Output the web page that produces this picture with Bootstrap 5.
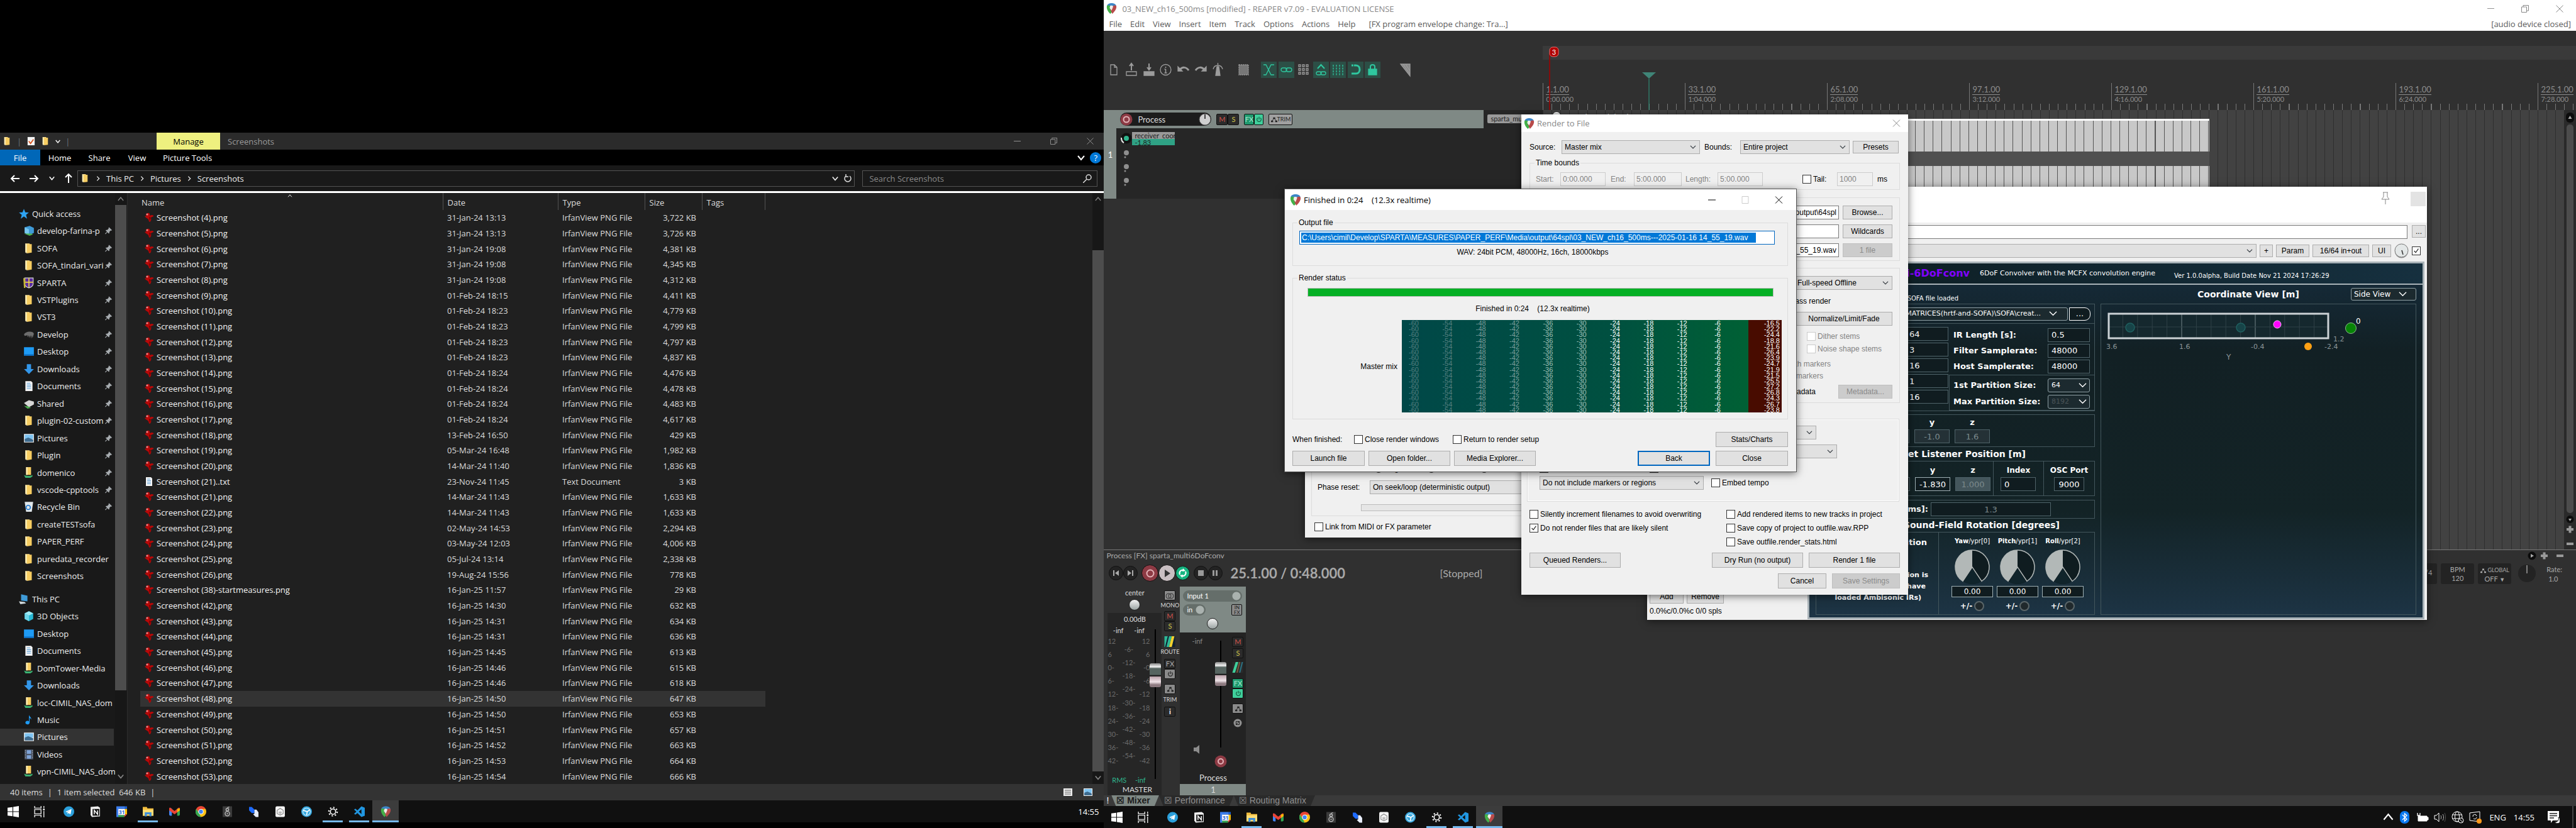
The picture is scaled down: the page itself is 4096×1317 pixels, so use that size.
<!DOCTYPE html>
<html lang="en">
<head>
<meta charset="utf-8">
<meta name="viewport" content="width=device-width, initial-scale=1">
<title>Desktop</title>
<link href="https://cdn.jsdelivr.net/npm/bootstrap@5.3.0/dist/css/bootstrap.min.css" rel="stylesheet">
<style>
body{margin:0;background:#000;font-family:"Open Sans","Noto Sans",sans-serif;font-size:13px;line-height:18px;color:#fff;overflow:hidden}
.desk{height:100vh;min-height:1317px}
.mon-l{flex:3 1 0;min-width:0;padding:211px 0 9px}
.mon-r{flex:4 1 0;min-width:0;background:#303030}
svg{display:block;flex:none}
a{color:inherit;text-decoration:none}
button,input,select{font-family:inherit;font-size:inherit;line-height:inherit}
/* explorer */
.ex-title{height:27px;background:#2b2b2b;color:#9a9a9a}
.quick{width:249px}
.manage{background:#eef07f;width:101px}
.ex-rib{height:25px;background:#000}
.ex-rib a{height:25px}
.file-tab{background:#0067b8;width:64px}
.help{background:#0078d7;width:18px;height:18px}
.ex-addr{height:41px;background:#191919}
.ex-box{height:26px;border:1px solid #535353;background:#191919;color:#eee;border-radius:0}
.ex-box input{background:none;border:0;outline:0;color:#fff;width:100%}
.ex-box input::placeholder{color:#8a8a8a;opacity:1}
.ex-body{background:#202020;border-top:3px solid #fff}
.side{width:203px;background:#191919;border-right:1px solid #2c2c2c}
.tree{padding:19px 0 6px;width:183px;overflow:hidden}
.tree a{flex:3 1 0;padding-left:37px;white-space:nowrap;color:#eee}
.tree a.root{padding-left:29px}
.tree .gapx{flex:1 1 0}
.tree a.on{background:#333;margin-right:2px}
.tree .nm{width:108px;overflow:hidden}
.tree .wide .nm{width:124px}
.sbar{width:18px;background:#171717;color:#888}
.sbar i{width:18px;background:#4d4d4d}
.files{width:994px;margin-left:20px;height:940px;table-layout:fixed;border-collapse:collapse}
.files th{height:27px;font-weight:400;padding:2px 7px 0;border-right:1px solid #525252;color:#ddd}
.files th:first-child{padding-left:2px}
.files td{padding:0 7px;color:#ddd;white-space:nowrap;overflow:hidden}
.files td:first-child{padding-left:6px;color:#f4f4f4}
.files td:nth-child(4){text-align:right;padding-right:9px}
.files tr.on td{background:#333}
.ex-stat{height:26px;background:#333;color:#ddd}
.tbar{height:35px;background:#101010}
.tbar button{width:42px;border:0;background:none;padding:0}
.tbar .run{box-shadow:inset 0 -3px 0 #76b9ed;width:32px;margin:0 5px}
.tbar .act{background:#3c3c3c;box-shadow:inset 0 -3px 0 #76b9ed}
/* daw */
.lato{font-family:Lato,"Open Sans",sans-serif}
.dw-head{height:49px;background:#fff;color:#5a5a5a}
.dw-head .ttl{height:27px;color:#888}
.dw-head .menu{height:22px;gap:13px}
.left-col{flex:0 0 698px}
.tools{padding:49px 0 0 3px;height:126px}
.tools button{width:25px;height:26px;padding:0;border:0;background:none;color:#9c9c9c}
.tools .gr{background:#2c4f46;color:#2fc79f}
.ruler{height:126px;padding-top:24px}
.ruler .strip{height:22px;background:#3a3a3a;margin-bottom:37px}
.marks{height:43px;overflow:hidden;background:repeating-linear-gradient(90deg,#777 0 1px,transparent 1px calc(226px / 16)) 0 100%/100% 10px no-repeat}
.mk{flex:0 0 226px;border-left:1px solid #777;padding:2px 0 0 4px;color:#8c8c8c;font-size:13px;line-height:16px}
.mk u{display:inline-block;text-decoration:none;border-bottom:1px solid #8c8c8c}
.mk b{display:block;font-weight:400;font-size:11px;line-height:14px}
.arr{background:repeating-linear-gradient(90deg,#2f2f2f 0 1px,transparent 1px calc(226px / 16)) #424242}
.clip{margin:14px 0 0 13px;width:1047px;height:112px;border-top:3px solid #fff}
.lane{background:repeating-linear-gradient(90deg,#555 0 1px,transparent 1px calc(226px / 16)) #c8c8c8}
.vbar{width:19px;background:#2a2a2a}
.tcp{height:141px}
.tcp .idx{width:20px;background:#7f8985;color:#fff}
.tcp .hd{height:29px;width:584px;background:#7f8985;padding-left:6px}
.tcp .bd{background:#262626}
.pill{width:145px;height:21px;border-radius:11px;background:#1c1c1c;color:#ddd;font-size:13px}
.mb{border:1px solid #111;background:#2b2b2b;color:#aaa;padding:0;font-size:11px;line-height:14px;border-radius:2px}
.m-r{color:#d0524a}.m-y{color:#d2c64a}.m-g{background:#1f9a6e;color:#a5e8cf}.m-gl{background:#3fcf9b;color:#14563d}.m-l{background:#8a8a8a;color:#222}
.trn{height:59px;border-top:1px solid #777;color:#aaa}
.cbtn{border-radius:50%;border:1px solid #111;background:#232323;padding:0;width:23px;height:23px;color:#8d8d8d;display:flex;align-items:center;justify-content:center}
.cbtn.big{width:27px;height:27px}
.clock{font-size:22px;font-weight:700;color:#a8a8a8;line-height:24px}
.tbox{height:33px;border-radius:3px;background:#232323;font-size:11px;line-height:14px;text-align:center;width:53px;padding-top:3px}
.mix{height:332px;padding-left:6px;font-size:11px;line-height:12px;color:#ddd}
.mpan{width:86px;height:290px;background:#262626}
.scale{color:#6b6b6b;height:202px}
.bcol{width:20px}
.bcol .mb{width:18px;height:16px}
.chan{width:105px;background:#232323;margin-left:6px}
.chan .top{height:73px;background:#7f8985;padding:6px 6px 0 5px}
.dd{height:18px;background:#656e6a;border:0;border-radius:9px;color:#fff;padding:0 6px;appearance:none;-webkit-appearance:none;background-image:radial-gradient(#aab2af 0 6px,transparent 7px);background-position:right 2px center;background-size:14px 14px;background-repeat:no-repeat}
.knob{width:18px;height:18px;border-radius:50%;background:linear-gradient(#f4f4f4,#9aa3a2);border:1px solid #222}
.fad{width:18px}
.fad input{position:absolute;left:50%;top:50%;transform:translate(-50%,-50%) rotate(-90deg);-webkit-appearance:none;appearance:none;height:18px;margin:0;background:linear-gradient(#000,#000) center/100% 2px no-repeat}
.fad .f1{width:238px}.fad .f2{width:170px}
.fad input::-webkit-slider-thumb{-webkit-appearance:none;appearance:none;width:38px;height:18px;border-radius:3px;background:linear-gradient(90deg,#8d7a80 0 10%,#f0e4e8 22%,#b9a0a9 45%,#222 46% 50%,#566460 52% 78%,#f2f2f2 85%,#888);border:0}
.tabs{height:17px;background:#3a3a3a;font-family:"Liberation Sans",Arial,sans-serif;font-size:14px;line-height:17px;color:#8f8f8f}
.tabs a{padding:0 14px 0 8px;background:#2a2a2a;clip-path:polygon(0 0,100% 0,calc(100% - 7px) 100%,7px 100%)}
.tabs a.on{background:#7f8985;color:#1b1b1b;font-weight:700}
/* floating windows */
.win{position:absolute;background:#f0f0f0;color:#000;font-family:"Liberation Sans",Arial,sans-serif;font-size:12px;line-height:16px;box-shadow:0 2px 12px rgba(0,0,0,.55)}
.win .bar{background:#fff;font-family:"Open Sans",sans-serif;font-size:13px}
.win fieldset,.grp{border:1px solid #dcdcdc;margin:0;padding:0;min-width:0}
.win legend{float:none;width:auto;font-size:12px;line-height:14px;height:14px;margin:0 0 0 7px;padding:0 2px}
.wb{border:1px solid #adadad;background:#e1e1e1;color:#000;height:24px;padding:0;border-radius:0;font-size:12px;line-height:16px}
.wb:disabled{background:#ccc;border-color:#bfbfbf;color:#8a8a8a}
.wb.h22{height:22px}.wb.h20{height:20px}
.wb.def{border:2px solid #0067c0}
.win .form-select{border:1px solid #adadad;background-color:#e1e1e1;color:#000;border-radius:0;height:22px;padding:0 20px 0 4px;font-size:12px;line-height:16px;background-size:10px;background-position:right 5px center}
.win .form-control{border:1px solid #7a7a7a;border-radius:0;height:22px;padding:0 3px;font-size:12px;line-height:16px;background:#fff;color:#000}
.win .form-control:disabled{border-color:#ccc;background:#f0f0f0;color:#838383}
.win .form-check-input{width:14px;height:14px;margin:0;border:1px solid #333;flex:none;background-color:#fff}
.win .form-check-input[type=checkbox]{border-radius:0}
.win .form-check-input:disabled{border-color:#ccc;opacity:1}
.win .form-check-input:checked[type=checkbox]{background-image:url("data:image/svg+xml,%3csvg xmlns='http://www.w3.org/2000/svg' viewBox='0 0 14 14'%3e%3cpath d='M3 7l3 3 5-7' fill='none' stroke='%23222' stroke-width='1.3'/%3e%3c/svg%3e")}
.win .form-check-input:checked[type=radio]{background-image:radial-gradient(#333 0 3px,transparent 4px)}
.win label.ck{display:flex;align-items:center;gap:3px;white-space:nowrap}
.dis{color:#838383}
.w-lfo{left:2075px;top:600px;width:500px;height:255px}
.w-fx{left:2619px;top:297px;width:1240px}
.w-ren{left:2419px;top:182px;width:615px;height:764px}
.w-fin{left:2042px;top:300px;width:815px;height:451px;border:1px solid #555}
.win .selin{color:#fff;border-color:#0067c0;background:linear-gradient(#0078d7,#0078d7) 2px 2px/723px 16px no-repeat #fff}
.done{height:14px;border-radius:0;border:1px solid #bcbcbc}
.done .progress-bar{background:#06b025}
.meter{height:147px;font-size:11px;line-height:10px;color:#fff;display:grid;grid-template-columns:27px repeat(9,1fr) 94px;grid-auto-rows:1fr;padding-right:3px;overflow:hidden;text-align:right;background:linear-gradient(90deg,transparent 0 551px,#480c00 551px),linear-gradient(90deg,#004848 0,#005040 55%,#006035 90%)}
.meter span{height:9px}
.meter .c0,.meter .c1{color:#557f80}.meter .c2,.meter .c3{color:#7b9d9b}.meter .c4,.meter .c5{color:#a3c2b8}
/* convolver */
.plug{width:981px;height:569px;border:3px solid #a9b3b8;color:#fff;font-family:"DejaVu Sans",Verdana,sans-serif;font-size:12px;line-height:14px;background:linear-gradient(#162c3c,#122024 25%,#132326 70%,#1d3445)}
.plug .hdr{height:34px;border-bottom:2px solid #a9b3b8;background:linear-gradient(90deg,#0d1d22,#16303f)}
.plug .name6{color:#8000ff;font-size:16px;font-weight:700;width:255px;text-align:right}
.plug b{font-size:13px}
.plug b.big{font-size:14px}
.pn{border:1px solid #43565c;margin-left:10px}
.lc{width:454px}
.bx{border:1px solid #4f6369;background:#101c20;color:#fff;height:22px;padding:0 5px;font-size:13px;border-radius:0}
.bx.mid{text-align:center;width:56px;padding:0}
.bx.off{color:#7c8a8d;background:#243136}
.bx.w67{width:67px}
.plug select.bx{appearance:none;-webkit-appearance:none;border-radius:3px;border-color:#8fa0a5;font-size:11px;background:url("data:image/svg+xml,%3csvg xmlns='http://www.w3.org/2000/svg' viewBox='0 0 14 10'%3e%3cpath d='M1 2l6 6 6-6' fill='none' stroke='%23fff' stroke-width='1.5'/%3e%3c/svg%3e") right 4px center/13px no-repeat #1c2a2f}
.plug select.wide-arrow{background-position:right 14px center}
.rot{width:72px;text-align:center}
.rot .bx{width:66px;height:18px;border-color:#9fb0b4;text-align:center;font-size:12px}
.rot input[type=radio]{appearance:none;-webkit-appearance:none;width:16px;height:16px;border-radius:50%;border:2px solid #5b6669;background:#20292c;margin:0}
</style>
<script src="https://cdn.jsdelivr.net/npm/bootstrap@5.3.0/dist/js/bootstrap.bundle.min.js"></script>
</head>
<body>
<svg width="0" height="0" class="position-absolute" aria-hidden="true">
<defs>
<symbol id="folder" viewBox="0 0 16 16"><path d="M3 1h6v13l-6-1z" fill="#ffe08a"/><path d="M5 2h7v12l-7 1z" fill="#f7cd62"/><path d="M5 2v13l-2-1V1z" fill="#ffefb8"/></symbol>
<symbol id="netfolder" viewBox="0 0 16 16"><path d="M4 0h7v11H4z" fill="#f7cd62"/><path d="M4 0h2v11H4z" fill="#ffefb8"/><path d="M1 11c4 2 9 2 12 0v2l-3 2H3z" fill="#3bb273"/></symbol>
<symbol id="star" viewBox="0 0 16 16"><path d="M8 1l2 5 5 .3-4 3.2L12.500 15 8 11.800 3.500 15 5 9.500 1 6.300 6 6z" fill="#2ea3f2"/></symbol>
<symbol id="cube" viewBox="0 0 16 16"><path d="M8 1l6 3v8l-6 3-6-3V4z" fill="#28b9d6"/><path d="M8 1l6 3-6 3-6-3z" fill="#9feaf5"/><path d="M2 4l6 3v8l-6-3z" fill="#6fd6ea"/></symbol>
<symbol id="devf" viewBox="0 0 16 16"><path d="M2 3l7-2 6 3v7l-7 3-6-3z" fill="#3f9bd8"/><path d="M2 3l6 3v8l-6-3z" fill="#78c6f0"/><path d="M1 12l8 3 5-2-3-1z" fill="#4caf50"/></symbol>
<symbol id="shield" viewBox="0 0 16 16"><path d="M2 1h12v8c0 3-3 5-6 6-3-1-6-3-6-6z" fill="#5a2ca0" stroke="#ddd"/><path d="M8 1v13M2 7h12" stroke="#e8d24a" stroke-width="1.500"/><path d="M0 1l3 1v13H1z" fill="#c7b83a"/></symbol>
<symbol id="hand" viewBox="0 0 16 16"><path d="M1 8c2-4 8-5 13-3l1 2-2 6-1-4-1 5-1-5-2 4 0-4-2 3 0-3-4 1z" fill="#6d6d6d"/></symbol>
<symbol id="desktop" viewBox="0 0 16 16"><path d="M1 2h14v12H1z" fill="#1e9bf5"/><path d="M1 12h14v2H1z" fill="#0b6dc2"/></symbol>
<symbol id="down" viewBox="0 0 16 16"><path d="M5 1h6v7h4l-7 7-7-7h4z" fill="#3397ea"/></symbol>
<symbol id="doc" viewBox="0 0 16 16"><path d="M3 1h8l2 2v12H3z" fill="#f5f5f5"/><path d="M5 4h5M5 6.500h6M5 9h6M5 11.500h6" stroke="#5ba0d8"/></symbol>
<symbol id="tick" viewBox="0 0 16 16"><path d="M2 1h12v14H2z" fill="#f5f5f5"/><path d="M4 8l3 4 5-7" stroke="#d9541e" stroke-width="2" fill="none"/></symbol>
<symbol id="shared" viewBox="0 0 16 16"><path d="M1 7l7-4 7 2v4l-7 4z" fill="#d7d7d7"/><path d="M1 11l6 1 4 2-5 1z" fill="#4caf50"/></symbol>
<symbol id="pic" viewBox="0 0 16 16"><path d="M1 2h14v12H1z" fill="#f5f5f5"/><path d="M2 3h12v6H2z" fill="#7ec4f2"/><path d="M2 9l5-2 7 3v3H2z" fill="#3d6b8f"/></symbol>
<symbol id="bin" viewBox="0 0 16 16"><path d="M2 1h12l-2 14H4z" fill="#dfe6ea"/><circle cx="7" cy="9" r="3" fill="none" stroke="#1976d2" stroke-width="1.500"/></symbol>
<symbol id="pc" viewBox="0 0 16 16"><path d="M4 1l9 2v8l-9-1z" fill="#3f9bd8"/><path d="M1 11l8 1 2 2-8 1z" fill="#cfd8dc"/></symbol>
<symbol id="music" viewBox="0 0 16 16"><path d="M8 1c1 3 4 3 3 7 0-2-1-2-2-3v7a3 2.500 0 1 1-1-2z" fill="#1e9bf5"/></symbol>
<symbol id="video" viewBox="0 0 16 16"><path d="M2 1h12v14H2z" fill="#4a5568"/><path d="M5 2h6v5H5zM5 9h6v5H5z" fill="#7fa4d8"/><path d="M3 2v12M13 2v12" stroke="#bbb" stroke-dasharray="1 1.500"/></symbol>
<symbol id="pin" viewBox="0 0 12 12"><path d="M7 0l5 5-1 1-1-.5-2.500 2.500 0 2-1 1-2.500-2.500L1 12 0 11l3.500-3L1 5.500l1-1h2L6.500 2 6 1z" fill="#a7acb0"/></symbol>
<symbol id="irf" viewBox="0 0 16 16"><path d="M6 1c2-1 4 1 3 4l3-1c2 0 4 1 3 2l-4 2c1 3 0 6-2 7-2-1-1-4-3-5l-3-2C0 6 2 5 4 6c-2-3 0-5 2-5z" fill="#b80808"/><path d="M8 7l3 1-2 6z" fill="#7a0000"/><circle cx="5" cy="3" r="1.600" fill="#e88"/></symbol>
<symbol id="win" viewBox="0 0 16 16"><path d="M0 2.500l7-1v6H0zM8 1.300L16 0v7.500H8zM0 8.500h7v6l-7-1zM8 8.500h8V16l-8-1.300z" fill="#fff"/></symbol>
<symbol id="task" viewBox="0 0 16 16"><path d="M1 0v3h9V0M1 5h9v6H1zM1 16v-3h9v3M14 0v3M14 7v9" stroke="#ddd" stroke-width="1.300" fill="none"/><circle cx="14" cy="5" r="1.300" fill="#fff"/></symbol>
<symbol id="tg" viewBox="0 0 16 16"><circle cx="8" cy="8" r="8" fill="#2ba0dc"/><path d="M3 8l9-4-1.500 8-3-2-1.500 1.500V9l4-3-5 3z" fill="#fff"/></symbol>
<symbol id="notion" viewBox="0 0 16 16"><path d="M1 1l11-1 3 2v13l-12 1-2-3z" fill="#eee"/><path d="M4 4h10v10H4z" fill="#111"/><path d="M6.500 12V6l5 6V6" stroke="#fff" stroke-width="1.400" fill="none"/></symbol>
<symbol id="cal" viewBox="0 0 16 16"><path d="M0 0h13v4H4v12H0z" fill="#3b7ded"/><path d="M13 0h3v4h-3z" fill="#1a5fd0"/><path d="M13 4h3v8h-3z" fill="#fbbc04"/><path d="M3 13h9v3H3z" fill="#34a853"/><path d="M12 16v-4h4z" fill="#ea4335"/><path d="M3 4h10v9H3z" fill="#fff"/><text x="8" y="11.500" font-size="8" font-weight="700" text-anchor="middle" fill="#2a66d8">31</text></symbol>
<symbol id="expl" viewBox="0 0 16 16"><path d="M0 1h6l1 2h9v11H0z" fill="#f2bd3e"/><path d="M0 5h16v9H0z" fill="#ffdd75"/><path d="M3 9h10v6h-3v-3H6v3H3z" fill="#3f8fd8"/></symbol>
<symbol id="gmail" viewBox="0 0 16 16"><path d="M0 3h4v11H1.500L0 13z" fill="#4285f4"/><path d="M12 3h4v10l-1.500 1H12z" fill="#34a853"/><path d="M0 3c1-2 2-1 3 0l5 4 5-4c1-1 2-2 3 0v3l-8 6-8-6z" fill="#ea4335"/><path d="M12 4l4-1v3l-4 3z" fill="#fbbc04"/></symbol>
<symbol id="chrome" viewBox="0 0 16 16"><circle cx="8" cy="8" r="8" fill="#fbc116"/><path d="M1 4a8 8 0 0 1 14 0H8L5 9z" fill="#ea4335"/><path d="M1 4l4.500 7L8 16A8 8 0 0 1 1 4z" fill="#34a853"/><circle cx="8" cy="8" r="4" fill="#fff"/><circle cx="8" cy="8" r="3" fill="#4285f4"/></symbol>
<symbol id="g8" viewBox="0 0 16 16"><path d="M1 0h14v16H1z" fill="#3b3b3b"/><circle cx="8" cy="11" r="3.300" fill="none" stroke="#bbb" stroke-width="1.300"/><circle cx="8" cy="11" r="1" fill="#bbb"/><circle cx="8" cy="5" r="2" fill="none" stroke="#bbb" stroke-width="1.300"/><path d="M8 2l3-1" stroke="#bbb"/></symbol>
<symbol id="steps" viewBox="0 0 16 16"><path d="M1 1h4l4 4v5H5L1 6z" fill="#1e6bff"/><path d="M9 5h3l3 4v7h-4l-4-4 2-1z" fill="#e8eefc"/></symbol>
<symbol id="house" viewBox="0 0 16 16"><rect x="1" y="0" width="14" height="16" rx="2" fill="#f5f5f5"/><path d="M8 3l4.500 3v5L8 13l-4.500-2V6z" fill="none" stroke="#888"/><path d="M5 9c2-2 4-2 6 0l-3 3z" fill="#bbb"/></symbol>
<symbol id="orb" viewBox="0 0 16 16"><circle cx="8" cy="8" r="8" fill="#39a9e0"/><circle cx="8" cy="8" r="5.500" fill="none" stroke="#d6f1ff"/><path d="M3 6l6 2 4-3M9 8l-1 5" stroke="#fff" stroke-width="1.500" fill="none"/></symbol>
<symbol id="gear" viewBox="0 0 16 16"><circle cx="8" cy="8" r="4" fill="none" stroke="#fff" stroke-width="1.600"/><circle cx="8" cy="8" r="6.300" fill="none" stroke="#fff" stroke-width="2" stroke-dasharray="2 2.950"/></symbol>
<symbol id="code" viewBox="0 0 16 16"><path d="M11 0l5 2v12l-5 2-6-6-3 2.500L0 11l3.500-3L0 5l2-1.500L5 6zM11 4.500L7 8l4 3.500z" fill="#2196e0"/></symbol>
<symbol id="reaper" viewBox="0 0 16 16"><path d="M1 4C2 1 5 0 8 0s6 1 7 4l-5 1-4-1z" fill="#3c86c8"/><path d="M1 4c-1 5 2 9 5 12l3-3-3-5V4C4 3 2 3 1 4z" fill="#43b049"/><path d="M15 4c1 4-2 8-6 12l-3-7 3-4c2-2 5-2 6-1z" fill="#b84a4a"/><path d="M6 4c3-1 5 0 4 2L8 11 5 7z" fill="#f1ece8"/></symbol>
<symbol id="min" viewBox="0 0 12 12"><path d="M0 6h12" stroke="currentColor"/></symbol>
<symbol id="max" viewBox="0 0 12 12"><path d="M1 .5h10v11H1z" stroke="currentColor" fill="none"/></symbol>
<symbol id="rest" viewBox="0 0 12 12"><path d="M.5 3h8v8.500h-8zM3 3V.5h8.500V9H9" stroke="currentColor" fill="none"/></symbol>
<symbol id="x" viewBox="0 0 12 12"><path d="M.5.5l11 11M11.500.5l-11 11" stroke="currentColor" fill="none"/></symbol>
<symbol id="chd" viewBox="0 0 12 12"><path d="M1 3l5 6 5-6" stroke="currentColor" stroke-width="2" fill="none"/></symbol>
<symbol id="chu" viewBox="0 0 12 12"><path d="M1 9l5-6 5 6" stroke="currentColor" stroke-width="1.500" fill="none"/></symbol>
<symbol id="chr" viewBox="0 0 12 12"><path d="M4 2l4 4-4 4" stroke="currentColor" stroke-width="1.500" fill="none"/></symbol>
<symbol id="pwr" viewBox="0 0 12 12"><path d="M6 1v5M3.500 3a4 4 0 1 0 5 0" stroke="currentColor" stroke-width="1.400" fill="none"/></symbol>
<symbol id="env" viewBox="0 0 12 12"><path d="M2 9l4-6 4 6" stroke="currentColor" fill="none"/><path d="M0 8h4v3H0zM4 2h4v3H4zM8 8h4v3H8z" fill="currentColor"/></symbol>
<symbol id="route" viewBox="0 0 16 16"><path d="M0 0h16v16H0z" fill="#123"/><path d="M0 0h5L1 16H0z" fill="#2fb896"/><path d="M7 0h4L7 16H3z" fill="#2fb896"/><path d="M11 0h4l-4 16H7z" fill="#f2d22e"/></symbol>
<symbol id="route2" viewBox="0 0 16 16"><path d="M0 0h16v16H0z" fill="#2b2b2b"/><path d="M5 0h4L4 16H0z" fill="#3fcf9b"/><path d="M10 0h2L8 16H6z" fill="#7a5a3c"/><path d="M14 0h2l-4 16h-2z" fill="#2a6f80"/></symbol>
<symbol id="kn" viewBox="0 0 60 60"><circle cx="30" cy="30" r="27" fill="#0f1c20"/><path d="M30 30V3A27 27 0 0 0 15 52.500z" fill="#b2b8b7"/><path d="M15 52.500A27 27 0 1 1 45 52.500L30 30z" fill="none" stroke="#b2b8b7" stroke-width="1.500"/><path d="M16.500 53L30 32l13.500 21c-7 5-20 5-27 0z" fill="#10242b"/></symbol>
</defs>
</svg>

<main class="desk d-flex position-relative">
<!-- first monitor: file explorer -->
<section class="mon-l d-flex flex-column">
  <div class="ex-title d-flex align-items-stretch">
    <div class="quick d-flex align-items-center gap-2 px-1">
      <svg width="15" height="17"><use href="#folder"/></svg><span class="text-secondary">|</span>
      <svg width="15" height="17"><use href="#tick"/></svg><svg width="15" height="17"><use href="#folder"/></svg>
      <svg width="8" height="8" class="text-white"><use href="#chd"/></svg><span class="text-secondary">|</span>
    </div>
    <div class="manage text-center text-black d-flex align-items-center justify-content-center">Manage</div>
    <div class="flex-fill d-flex align-items-center ps-2 ms-1">Screenshots</div>
    <div class="d-flex align-items-center pe-3" style="gap:47px"><svg width="11" height="11"><use href="#min"/></svg><svg width="11" height="11"><use href="#rest"/></svg><svg width="11" height="11"><use href="#x"/></svg></div>
  </div>
  <nav class="ex-rib d-flex align-items-center">
    <a href="#" class="file-tab d-flex align-items-center justify-content-center">File</a>
    <a href="#" class="text-center pt-1" style="width:62px">Home</a><a href="#" class="text-center pt-1" style="width:64px">Share</a><a href="#" class="text-center pt-1" style="width:56px">View</a>
    <a href="#" class="text-center pt-1" style="width:104px">Picture Tools</a>
    <span class="ms-auto"></span><svg width="12" height="12" class="me-2"><use href="#chd"/></svg>
    <span class="help rounded-circle text-center me-1">?</span>
  </nav>
  <div class="ex-addr d-flex align-items-center">
    <div class="d-flex align-items-center justify-content-between ps-3 pe-2" style="width:123px">
      <svg width="15" height="12" viewBox="0 0 15 12"><path d="M7 1L2 6l5 5M2 6h13" stroke="#fff" stroke-width="2" fill="none"/></svg>
      <svg width="15" height="12" viewBox="0 0 15 12"><path d="M8 1l5 5-5 5M13 6H0" stroke="#fff" stroke-width="2" fill="none"/></svg>
      <svg width="9" height="9"><use href="#chd"/></svg>
      <svg width="12" height="15" viewBox="0 0 12 15"><path d="M1 6l5-5 5 5M6 1v14" stroke="#fff" stroke-width="2" fill="none"/></svg>
    </div>
    <div class="ex-box flex-fill d-flex align-items-center px-1">
      <svg width="15" height="17"><use href="#folder"/></svg>
      <svg width="10" height="10" class="mx-2"><use href="#chr"/></svg><a href="#">This PC</a>
      <svg width="10" height="10" class="mx-2"><use href="#chr"/></svg><a href="#">Pictures</a>
      <svg width="10" height="10" class="mx-2"><use href="#chr"/></svg><a href="#">Screenshots</a>
      <svg width="10" height="10" class="ms-auto me-2"><use href="#chd"/></svg>
      <svg width="13" height="14" viewBox="0 0 13 14"><path d="M10 3a5 5 0 1 1-6 0M4 0v4h4" stroke="#ddd" stroke-width="1.500" fill="none"/></svg>
    </div>
    <label class="ex-box d-flex align-items-center ps-2 pe-2" style="width:374px;margin:0 10px 0 12px"><input type="search" placeholder="Search Screenshots" aria-label="Search Screenshots">
      <svg width="14" height="14" viewBox="0 0 14 14"><circle cx="9" cy="5" r="4" fill="none" stroke="#ddd" stroke-width="1.500"/><path d="M6 8l-6 6" stroke="#ddd" stroke-width="1.500"/></svg></label>
  </div>
  <div class="ex-body d-flex flex-fill">
    <div class="side d-flex"><nav class="tree d-flex flex-column" id="tree"></nav>
      <div class="sbar d-flex flex-column align-items-center justify-content-between"><svg width="10" height="19"><use href="#chu"/></svg><i style="height:772px;margin-bottom:auto"></i><svg width="10" height="24"><use href="#chd"/></svg></div>
    </div>
    <div class="flex-fill position-relative"><svg class="position-absolute" width="10" height="7" style="left:253px;top:1px"><use href="#chu"/></svg>
      <table class="files"><colgroup><col style="width:481px"><col style="width:183px"><col style="width:138px"><col style="width:91px"><col></colgroup>
      <thead><tr><th>Name</th><th>Date</th><th>Type</th><th>Size</th><th>Tags</th></tr></thead><tbody id="files"></tbody></table>
    </div>
    <div class="sbar d-flex flex-column align-items-center"><svg width="10" height="19" class="mb-auto"><use href="#chu"/></svg><i style="height:829px"></i><svg width="10" height="20"><use href="#chd"/></svg></div>
  </div>
  <div class="ex-stat d-flex align-items-center px-3 gap-2"><span>40 items</span><span>|</span><span>1 item selected&nbsp; 646 KB</span><span>|</span>
    <svg width="14" height="12" viewBox="0 0 14 12" class="ms-auto"><path d="M0 0h14v12H0z" fill="#eee"/><path d="M2 3h10M2 6h10M2 9h10" stroke="#555"/></svg>
    <svg width="18" height="16" class="ms-2"><use href="#pic"/></svg></div>
  <div class="tbar d-flex align-items-stretch"><div class="d-flex tray-apps"></div><span class="ms-auto pe-2 align-self-center">14:55</span></div>
</section>

<!-- second monitor: audio workstation -->
<section class="mon-r d-flex flex-column">
  <header class="dw-head">
    <div class="ttl d-flex align-items-center px-1"><svg width="17" height="19" class="me-2"><use href="#reaper"/></svg><span>03_NEW_ch16_500ms [modified] - REAPER v7.09 - EVALUATION LICENSE</span>
      <div class="ms-auto d-flex align-items-center pe-3" style="gap:43px"><svg width="11" height="11"><use href="#min"/></svg><svg width="12" height="12"><use href="#rest"/></svg><svg width="12" height="12"><use href="#x"/></svg></div></div>
    <nav class="menu d-flex align-items-center ps-2 pe-2"><a href="#">File</a><a href="#">Edit</a><a href="#">View</a><a href="#">Insert</a><a href="#">Item</a><a href="#">Track</a><a href="#">Options</a><a href="#">Actions</a><a href="#">Help</a><span class="ps-2">[FX program envelope change: Tra...]</span><span class="ms-auto">[audio device closed]</span></nav>
  </header>
  <div class="d-flex">
    <div class="left-col tools d-flex align-items-start" id="tools"></div>
    <div class="ruler flex-fill position-relative lato overflow-hidden" style="min-width:0">
      <div class="strip"></div>
      <div class="marks d-flex" id="marks"></div>
      <svg class="position-absolute" style="left:10px;top:25px" width="30" height="101" viewBox="0 0 30 101"><path d="M1 10v91" stroke="#a00000" stroke-width="1.500"/><rect x="1" y="1" width="14" height="15" rx="5" fill="#b00000" stroke="#e66"/><text x="8" y="12.500" font-size="11" fill="#fff" text-anchor="middle">3</text></svg>
      <svg class="position-absolute" style="left:158px;top:66px" width="22" height="60" viewBox="0 0 22 60"><path d="M0 0h22L11 10z" fill="#3f8577"/><path d="M11 10v50" stroke="#2c9c82"/></svg>
    </div>
  </div>
  <div class="d-flex flex-fill" style="min-height:0">
    <div class="left-col lato">
      <div class="tcp d-flex">
        <div class="idx d-flex align-items-center justify-content-center">1</div>
        <div class="bd flex-fill">
          <div class="d-flex"><div class="hd d-flex align-items-center gap-2">
            <div class="pill d-flex align-items-center justify-content-between"><svg width="20" height="20" viewBox="0 0 20 20"><circle cx="10" cy="10" r="9.500" fill="#8d3a44"/><circle cx="10" cy="10" r="4.500" fill="none" stroke="#e3b3b8" stroke-width="2"/></svg><span class="me-auto ps-2">Process</span><svg width="20" height="20" viewBox="0 0 20 20"><circle cx="10" cy="10" r="9" fill="#cfcfcf" stroke="#555"/><path d="M10 2v7" stroke="#111" stroke-width="1.500"/></svg></div>
            <div class="d-flex"><button class="mb m-r" style="width:18px;height:18px">M</button><button class="mb m-y" style="width:18px;height:18px">S</button></div>
            <div class="d-flex"><button class="mb m-g" style="width:16px;height:18px">FX</button><button class="mb m-gl d-flex align-items-center justify-content-center" style="width:15px;height:18px"><svg width="10" height="10"><use href="#pwr"/></svg></button></div>
            <button class="mb m-l d-flex align-items-center justify-content-center" style="width:38px;height:18px;background:#a0a0a0;font-size:9px"><svg width="10" height="10"><use href="#env"/></svg>TRIM</button>
          </div><div style="background:#9a9a9a;color:#222;font-size:11px;line-height:14px;height:14px;margin:7px 0 0 6px;padding:0 5px;width:70px;border-radius:2px" class="overflow-hidden">sparta_multi</div></div>
          <div class="d-flex" style="padding:6px 0 0 7px">
            <svg width="18" height="90" viewBox="0 0 18 90"><circle cx="9" cy="10" r="8.500" fill="#111"/><circle cx="9" cy="10" r="4" fill="#2fb58d"/><path d="M1 9c0 4 2 7 4 8" stroke="#eee" stroke-width="2" fill="none"/><g fill="#8e8e8e"><circle cx="9" cy="33" r="4"/><circle cx="9" cy="55" r="4"/><circle cx="9" cy="77" r="4"/><circle cx="7" cy="40" r="1.500"/><circle cx="7" cy="62" r="1.500"/><circle cx="7" cy="84" r="1.500"/></g></svg>
            <div style="width:68px;font-size:11px;line-height:11px;color:#1c1c1c"><div style="background:#999;height:11px" class="overflow-hidden ps-1">receiver_coord</div><div style="background:#2fa285;height:10px" class="ps-1">-1.83</div></div>
          </div>
        </div>
      </div>
    </div>
    <div class="arr flex-fill position-relative overflow-hidden">
      <div class="position-absolute d-flex lato" style="left:15px;top:2px;gap:4px;font-size:12px;color:#ccc"><span class="knob" style="width:14px;height:14px"></span><span>M</span><span>FX</span><span>[-15.0dB] noise_1000.wav</span></div>
      <div class="clip"><div class="lane" style="height:49px"></div><div style="height:23px;background:#505050"></div><div class="lane" style="height:40px"></div></div>
    </div>
    <div class="vbar d-flex flex-column align-items-center pt-1 pb-1"><svg width="13" height="16" viewBox="0 0 13 16"><rect width="13" height="16" rx="6" fill="#0c0c0c"/><path d="M6.500 5l3 5h-6z" fill="#aaa"/></svg><i class="flex-fill" style="width:11px;background:#4c4c4c;border-radius:5px;margin:3px 0 4px"></i>
      <svg width="13" height="50" viewBox="0 0 13 50"><circle cx="6.500" cy="6" r="6" fill="#0c0c0c"/><path d="M4 5h5l-2.500 4z" fill="#aaa"/><path d="M1 22h11M6.500 16.500v11M1 45h11" stroke="#999" stroke-width="4"/></svg></div>
  </div>
  <div class="trn d-flex justify-content-between lato">
    <div><div class="px-1" style="font-size:12px;line-height:18px">Process [FX] sparta_multi6DoFconv</div>
      <div class="d-flex align-items-center" style="padding:5px 0 0 8px">
        <button class="cbtn" aria-label="Start"><svg width="10" height="9"><path d="M0 0h2v9H0zM9 0v9L3 4.500z" fill="#aaa"/></svg></button><button class="cbtn" aria-label="End"><svg width="10" height="9"><path d="M7 0h2v9H7zM0 0v9l6-4.500z" fill="#aaa"/></svg></button>
        <button class="cbtn big" aria-label="Record" style="margin-left:6px;background:#8d3a44"><svg width="14" height="14"><circle cx="7" cy="7" r="5.500" fill="none" stroke="#e3b3b8" stroke-width="2"/></svg></button>
        <button class="cbtn big" aria-label="Play" style="background:#c9bfc2"><svg width="12" height="12"><path d="M2 0l9 6-9 6z" fill="#333"/></svg></button>
        <button class="cbtn" aria-label="Repeat" style="background:#17b481"><svg width="15" height="15" viewBox="0 0 15 15"><path d="M3 10a5 5 0 0 1 6-7M12 5a5 5 0 0 1-6 7" stroke="#fff" stroke-width="2" fill="none"/><path d="M8 0l4 4-5 1zM7 15l-4-4 5-1z" fill="#fff"/></svg></button>
        <button class="cbtn" style="margin-left:6px" aria-label="Stop"><svg width="9" height="9"><path d="M0 0h9v9H0z" fill="#999"/></svg></button>
        <button class="cbtn" aria-label="Pause"><svg width="9" height="9"><path d="M0 0h3v9H0zM5 0h3v9H5z" fill="#999"/></svg></button>
        <span class="clock text-nowrap" style="margin-left:12px;width:333px">25.1.00 / 0:48.000</span><span style="font-size:16px">[Stopped]</span>
      </div></div>
    <div class="d-flex flex-column align-items-end pe-2">
      <svg width="75" height="19" viewBox="0 0 75 19"><circle cx="13" cy="9" r="6.500" fill="#0c0c0c"/><path d="M11 6l5 3-5 3z" fill="#aaa"/><path d="M27 9h11M32.500 3.500v11M52 9h11" stroke="#999" stroke-width="4"/></svg>
      <div class="d-flex" style="gap:6px;margin-top:2px;padding-right:14px"><div class="tbox pt-2 text-end pe-2">4/4</div><div class="tbox">BPM<br>120</div>
      <div class="tbox"><svg width="9" height="9" class="d-inline-block"><use href="#env"/></svg> <span style="font-size:9px">GLOBAL</span><br>OFF <span style="font-size:9px">▼</span></div>
      <svg width="30" height="33" viewBox="0 0 30 33" class="mx-1"><circle cx="15" cy="16" r="14" fill="#232323"/><path d="M15 3v13" stroke="#ddd"/></svg><div style="font-size:11px;line-height:15px;padding:2px 0 0 6px">Rate:<br>&nbsp;1.0</div></div>
    </div>
  </div>
  <div class="mix d-flex lato">
    <div><div class="d-flex flex-column align-items-center" style="height:42px;padding-top:4px">center<span class="knob mt-1"></span></div>
      <div class="mpan d-flex flex-column"><div class="text-center pt-1" style="height:18px">0.00dB</div>
        <div class="d-flex flex-fill"><div class="d-flex flex-column" style="width:67px"><div class="d-flex justify-content-around py-1" style="height:21px"><span>-inf</span><span>-inf</span></div>
          <div class="scale d-flex justify-content-between"><div class="d-flex flex-column justify-content-between"><span>12</span><span>6</span><span>0-</span><span>6-</span><span>12-</span><span>18-</span><span>24-</span><span>30-</span><span>36-</span><span>42-</span></div>
          <div class="d-flex flex-column justify-content-between text-center" style="padding:13px 0 8px"><span>-6-</span><span>-12-</span><span>-18-</span><span>-24-</span><span>-30-</span><span>-36-</span><span>-42-</span><span>-48-</span><span>-54-</span></div>
          <div class="d-flex flex-column justify-content-between text-end"><span>12</span><span>6</span><span>-0</span><span>-6</span><span>-12</span><span>-18</span><span>-24</span><span>-30</span><span>-36</span><span>-42</span></div></div>
          <div class="d-flex justify-content-around mt-auto" style="color:#2fb58d"><span>RMS</span><span>-inf</span></div></div>
          <div class="fad position-relative"><input class="f1" type="range" value="73" aria-label="Master volume"></div></div>
        <div class="text-center" style="font-size:12px;height:18px;line-height:17px;padding-left:8px">MASTER</div></div></div>
    <div class="bcol d-flex flex-column align-items-center" style="margin-left:3px;padding-top:6px;font-size:9px">
      <button class="mb m-l" aria-label="Mono"><svg width="16" height="13" viewBox="0 0 16 13"><circle cx="6" cy="7" r="4" fill="none" stroke="#333"/><circle cx="10" cy="7" r="4" fill="none" stroke="#333"/></svg></button><span style="height:17px;padding-top:2px">MONO</span>
      <button class="mb m-r">M</button><button class="mb m-y mt-0">S</button>
      <svg width="18" height="17" class="mt-2"><use href="#route"/></svg><span style="height:19px;padding-top:2px">ROUTE</span>
      <button class="mb">FX</button><button class="mb m-l ps-1"><svg width="10" height="10"><use href="#pwr"/></svg></button>
      <button class="mb m-l mt-2 ps-1"><svg width="10" height="10"><use href="#env"/></svg></button><span style="height:20px;padding-top:3px">TRIM</span>
      <button class="mb fw-bold text-white">i</button></div>
    <div class="chan d-flex flex-column">
      <div class="top"><select class="dd w-100" aria-label="Input"><option>Input 1</option></select>
        <div class="d-flex justify-content-between mt-1"><select class="dd" style="width:36px" aria-label="Mode"><option>in</option></select><button class="mb m-l" style="width:17px;height:18px;font-size:8px;line-height:8px">IN FX</button></div>
        <div class="d-flex justify-content-center" style="padding-top:4px"><span class="knob"></span></div></div>
      <div class="d-flex flex-fill"><div class="d-flex flex-column justify-content-between align-items-center" style="width:55px;padding:8px 0 30px"><span style="color:#888">-inf</span>
        <svg width="12" height="14" viewBox="0 0 12 14"><path d="M0 4h4l5-4v14l-5-4H0z" fill="#8c8c8c"/></svg></div>
        <div class="d-flex flex-column align-items-center"><div class="fad position-relative" style="height:170px;margin-top:13px"><input class="f2" type="range" value="74" aria-label="Track volume"></div>
          <svg width="20" height="20" viewBox="0 0 20 20" style="margin-top:12px"><circle cx="10" cy="10" r="9.500" fill="#8d3a44"/><circle cx="10" cy="10" r="4" fill="none" stroke="#e3b3b8" stroke-width="2"/></svg></div>
        <div class="bcol d-flex flex-column align-items-center" style="margin-left:7px;padding-top:7px"><button class="mb m-r">M</button><button class="mb m-y" style="margin-top:2px">S</button>
          <svg width="18" height="17" style="margin:6px 0 9px"><use href="#route2"/></svg><button class="mb m-g">FX</button><button class="mb m-gl ps-1"><svg width="10" height="10"><use href="#pwr"/></svg></button>
          <button class="mb m-l mt-2 ps-1"><svg width="10" height="10"><use href="#env"/></svg></button>
          <svg width="14" height="14" class="mt-2" viewBox="0 0 14 14"><circle cx="7" cy="7" r="6.500" fill="#8e8e8e"/><path d="M4.500 4.500h5v5h-5zM4 10l6-6" fill="none" stroke="#222"/></svg></div></div>
      <div class="text-center" style="font-size:13px;height:18px;line-height:16px">Process</div>
      <div class="text-center" style="background:#7f8985;height:18px;line-height:18px;font-size:13px">1</div></div>
  </div>
  <nav class="tabs d-flex ps-1"><span class="pe-1 text-white">!</span><a href="#" class="on">☒ Mixer</a><a href="#">☒ Performance</a><a href="#">☒ Routing Matrix</a></nav>
  <div class="tbar d-flex align-items-stretch"><div class="d-flex tray-apps"></div>
    <div class="ms-auto d-flex align-items-center pe-1 gap-2">
      <svg width="17" height="17"><use href="#chu"/></svg>
      <svg width="20" height="20" viewBox="0 0 20 20"><rect x="2" width="15" height="20" rx="7" fill="#0a78f0"/><path d="M6 6l7 7-3.500 3V4L13 7l-7 7" stroke="#fff" stroke-width="1.300" fill="none"/></svg>
      <svg width="20" height="16" viewBox="0 0 20 16"><path d="M3 6h14v8H3zM17 8h2v4h-2z" fill="#fff" stroke="#fff"/><path d="M2 1v4h4V1M4 5v5" stroke="#fff" stroke-width="1.300" fill="#101010"/></svg>
      <svg width="20" height="16" viewBox="0 0 20 16"><path d="M1 5h3l4-4v14l-4-4H1z" fill="none" stroke="#fff"/><path d="M11 5c1 2 1 4 0 6M14 3c2 3 2 7 0 10" fill="none" stroke="#bbb"/><path d="M17 1c2 4 2 10 0 14" fill="none" stroke="#555"/></svg>
      <svg width="20" height="20" viewBox="0 0 20 20"><circle cx="9" cy="9" r="8" fill="none" stroke="#fff"/><ellipse cx="9" cy="9" rx="3.500" ry="8" fill="none" stroke="#fff"/><path d="M1 6h16M1 12h16" stroke="#fff"/><circle cx="15" cy="15" r="4" fill="#101010" stroke="#fff"/><path d="M12 12l6 6" stroke="#fff"/></svg>
      <svg width="20" height="20" viewBox="0 0 20 20"><path d="M1 3l16-2v16L1 15z" fill="none" stroke="#fff"/><path d="M6 9a3 3 0 0 1 6-1M12 10a3 3 0 0 1-5 2" fill="none" stroke="#fff"/><circle cx="16" cy="16" r="4" fill="#ff9a1a"/></svg>
      <span class="ms-1">ENG</span><span class="mx-1">14:55</span>
      <svg width="20" height="20" viewBox="0 0 20 20" class="ms-2"><path d="M1 0h18v15H9l-3 4v-4H1z" fill="#fff"/><path d="M4 4h12M4 7.500h12M4 11h7" stroke="#222" stroke-width="1.300"/><path d="M18 10a5 5 0 1 1-6 7 5 5 0 0 0 6-7z" fill="#fff" stroke="#222"/></svg>
      <svg width="14" height="35"><path d="M13 0v35" stroke="#777"/></svg>
    </div></div>
</section>

<!-- parameter modulation -->
<div class="win w-lfo d-flex flex-column justify-content-end">
  <div class="grp" style="margin-left:10px;padding:0 0 8px 9px;height:93px">
    <div class="d-flex" style="height:22px;margin-top:5px;gap:0"><span style="width:90px">Direction:</span><label class="ck" style="width:84px"><input type="radio" name="dir" class="form-check-input">Negative</label><label class="ck" style="width:84px"><input type="radio" name="dir" class="form-check-input" checked>Centered</label><label class="ck"><input type="radio" name="dir" class="form-check-input">Positive</label></div>
    <div class="d-flex align-items-center" style="margin-top:8px"><label for="phase" style="width:83px;flex:none">Phase reset:</label><select id="phase" class="form-select"><option>On seek/loop (deterministic output)</option></select></div>
    <div style="margin:16px 0 0 69px;height:11px;border:1px solid #bcbcbc;background:#e6e6e6"></div>
  </div>
  <label class="ck" style="margin:9px 0 9px 15px"><input type="checkbox" class="form-check-input">Link from MIDI or FX parameter</label>
</div>

<!-- effects window -->
<div class="win w-fx">
  <div class="bar d-flex justify-content-end" style="height:57px;padding:8px 2px 0"><svg width="16" height="22" viewBox="0 0 16 22"><path d="M4 1h8M5 1v7l-3 4h12l-3-4V1M8 12v8" fill="none" stroke="#888"/></svg><span style="width:24px;height:23px;background:#e3e3e3;margin-left:32px"></span></div>
  <div class="d-flex" style="height:632px">
    <div class="d-flex flex-column justify-content-end" style="width:255px;padding:0 0 6px 4px"><div class="d-flex" style="gap:5px"><button class="wb h22" style="width:54px">Add</button><button class="wb h22" style="width:59px">Remove</button></div><div style="padding-top:4px">0.0%c/0.0%c 0/0 spls</div></div>
    <div class="flex-fill" style="padding-right:2px">
      <div class="d-flex" style="padding-top:4px;gap:7px"><input class="form-control" style="margin-left:1px" aria-label="Comment"><button class="wb h20" style="width:22px;flex:none">...</button></div>
      <div class="d-flex align-items-center" style="padding:7px 8px 5px 0;gap:5px"><select class="form-select" aria-label="Preset"></select><button class="wb h20" style="flex:0 0 21px">+</button><button class="wb h20" style="flex:0 0 53px">Param</button><button class="wb h20" style="flex:0 0 90px">16/64 in+out</button><button class="wb h20" style="flex:0 0 30px">UI</button>
        <svg width="23" height="24" viewBox="0 0 23 24"><circle cx="11.500" cy="13" r="10.500" fill="#999"/><circle cx="11.500" cy="11.500" r="10.500" fill="#e3e7e7" stroke="#777"/><path d="M12 11l2 7" stroke="#333" stroke-width="1.500"/></svg><input type="checkbox" class="form-check-input" checked aria-label="Enabled"></div>
      <div class="plug" id="plug">
        <div class="hdr d-flex align-items-center"><span class="name6">multi-6DoFconv</span><span class="ms-3 text-nowrap" style="font-size:11px;width:309px">6DoF Convolver with the MCFX convolution engine</span><span class="text-nowrap pt-2" style="font-size:10px">Ver 1.0.0alpha, Build Date Nov 21 2024 17:26:29</span></div>
        <div class="d-flex">
          <div class="lc">
            <div class="text-end" style="height:30px;padding:15px 217px 0 0;font-size:10px">SOFA file loaded</div>
            <div class="pn d-flex justify-content-end align-items-center" style="height:32px;padding-right:6px"><select class="bx text-end" style="width:310px;height:21px;padding-right:42px;background-position:right 16px center" aria-label="SOFA file"><option>D:\MATRICES(hrtf-and-SOFA)\SOFA\creat...</option></select><button class="bx" style="width:34px;height:21px;border-color:#fff;border-radius:0 9px 9px 0;line-height:12px;margin-left:2px">...</button></div>
            <div class="d-flex justify-content-end pn" style="padding:5px 7px 0 0;height:139px;border-top:0">
              <div class="d-flex flex-column" style="width:68px;gap:3px" id="cA"></div>
              <div style="width:217px;margin-left:8px">
                <div class="d-flex align-items-center justify-content-between" style="height:25px"><b>IR Length [s]:</b><input class="bx w67" value="0.5" aria-label="IR Length"></div>
                <div class="d-flex align-items-center justify-content-between" style="height:25px"><b>Filter Samplerate:</b><input class="bx w67" value="48000" aria-label="Filter rate"></div>
                <div class="d-flex align-items-center justify-content-between" style="height:25px"><b>Host Samplerate:</b><input class="bx w67" value="48000" aria-label="Host rate"></div>
                <div style="border:1px solid #43565c;margin:1px -8px 0 -7px;padding:3px 7px 0 6px;height:57px">
                <div class="d-flex align-items-center justify-content-between text-nowrap" style="height:26px"><b>1st Partition Size:</b><select class="bx w67" aria-label="First partition"><option>64</option></select></div>
                <div class="d-flex align-items-center justify-content-between text-nowrap" style="height:25px"><b>Max Partition Size:</b><select class="bx w67" style="color:#4b5558" aria-label="Max partition"><option>8192</option></select></div></div>
              </div></div>
            <div class="pn d-flex justify-content-end text-center" style="height:52px;margin-top:5px;padding:5px 166px 0 0;gap:8px"><div><b>x</b><input class="bx mid off d-block mt-1" value="2.0" aria-label="x"></div><div><b>y</b><input class="bx mid off d-block mt-1" value="-1.0" aria-label="y"></div><div><b>z</b><input class="bx mid off d-block mt-1" value="1.6" aria-label="z"></div></div>
            <div class="text-end" style="height:22px;padding:4px 110px 0 0"><b class="big">Target Listener Position [m]</b></div>
            <div class="pn d-flex justify-content-end text-center" style="height:56px"><div class="d-flex" style="gap:8px;padding:7px 4px 0 0"><div><b>x</b><input class="bx mid d-block mt-1" value="0.000" aria-label="target x"></div><div><b>y</b><input class="bx mid d-block mt-1" style="border-color:#9fb0b4" value="-1.830" aria-label="target y"></div><div><b>z</b><input class="bx mid off d-block mt-1" style="background:#44565c" value="1.000" aria-label="target z"></div></div>
              <div style="width:80px;border-left:1px solid #43565c;padding:7px 11px 0"><b style="font-size:12px">Index</b><input class="bx d-block mt-1" style="width:56px" value="0" aria-label="Index"></div>
              <div style="width:81px;border-left:1px solid #43565c;padding:7px 4px 0"><b style="font-size:12px">OSC Port</b><input class="bx d-block mt-1 text-center px-0 mx-auto" style="width:48px" value="9000" aria-label="OSC Port"></div></div>
            <div class="pn d-flex justify-content-end align-items-center" style="height:30px;margin-top:6px;padding-right:69px"><b class="pe-1">Update time [ms]:</b><input class="bx text-center off" style="width:191px;background:#101c20" value="1.3" aria-label="Update time"></div>
            <div class="text-end" style="height:21px;padding:3px 56px 0 0"><b class="big">Sound-Field Rotation [degrees]</b></div>
            <div class="pn d-flex justify-content-end" style="height:132px"><div class="text-end flex-fill" style="border-right:1px solid #43565c;font-size:11px;line-height:18px;padding-top:7px;font-weight:700"><div style="font-size:13px;padding-right:18px">Enable Rotation</div><div style="padding:34px 16px 0 0">(rotation is</div><div style="padding-right:20px">only with have</div><div style="padding-right:27px">loaded Ambisonic IRs)</div></div>
              <div class="d-flex" style="padding:7px 14px 0 17px" id="rots"></div></div>
          </div>
          <div class="flex-fill d-flex flex-column" style="padding:0 10px 0 9px">
            <div class="d-flex align-items-center" style="height:30px"><b style="width:328px;padding-left:154px" class="big text-nowrap">Coordinate View [m]</b><select class="bx wide-arrow ms-auto" style="width:104px;height:20px;font-size:12px;padding:0 4px" aria-label="View"><option>Side View</option></select></div>
            <div style="border:1px solid #43565c;height:495px">
            <svg width="490" height="100" font-size="11" fill="#8c9699"><rect x="11" y="14" width="351" height="41" fill="#15282e"/><g id="grid" stroke="#2f4147"></g><path d="M128 14v41M245 14v41" stroke="#69787c"/><path d="M11 36h351" stroke="#2f4147"/><rect x="12" y="15" width="349" height="39" fill="none" stroke="#ccd2d6" stroke-width="3"/>
              <circle cx="46" cy="37" r="7" fill="#174448" stroke="#1f6060" stroke-width="1.500"/><circle cx="222" cy="37" r="7" fill="#174448" stroke="#1f6060" stroke-width="1.500"/><circle cx="280" cy="32" r="6" fill="#f0f" stroke="#fbf"/><circle cx="329" cy="67" r="6" fill="#ffa014"/><circle cx="397" cy="38" r="8.500" fill="#078407" stroke="#8b8"/>
              <text x="405" y="31" fill="#fff" font-size="12">0</text><text x="8" y="71">3.6</text><text x="124" y="71">1.6</text><text x="238" y="71">-0.4</text><text x="355" y="71">-2.4</text><text x="369" y="59">1.2</text><text x="199" y="88" font-size="12">Y</text></svg></div>
          </div>
        </div>
      </div>
    </div>
  </div>
</div>

<!-- render settings -->
<div class="win w-ren">
  <div class="bar d-flex align-items-center px-1" style="height:28px;color:#888"><svg width="17" height="19" class="me-1"><use href="#reaper"/></svg>Render to File<svg width="13" height="12" class="ms-auto me-2"><use href="#x"/></svg></div>
  <div style="padding:13px 13px 0 13px">
    <div class="d-flex align-items-center" style="padding-right:2px"><label for="src" style="width:51px">Source:</label><select id="src" class="form-select" style="width:220px"><option>Master mix</option></select><label for="bnd" style="width:64px;padding-left:7px">Bounds:</label><select id="bnd" class="form-select" style="width:174px"><option>Entire project</option></select><button class="wb h20 ms-auto" style="width:73px">Presets</button></div>
    <fieldset style="margin-top:7px;height:50px"><legend>Time bounds</legend>
      <div class="d-flex align-items-center dis" style="padding:8px 0 0 9px"><label for="t1" style="width:39px">Start:</label><input id="t1" class="form-control" style="width:72px" value="0:00.000" disabled><label for="t2" style="width:45px;padding-left:8px">End:</label><input id="t2" class="form-control" style="width:76px" value="5:00.000" disabled><label for="t3" style="width:57px;padding-left:6px">Length:</label><input id="t3" class="form-control" style="width:72px" value="5:00.000" disabled>
      <label class="ck text-black" style="width:55px;margin-left:63px"><input type="checkbox" class="form-check-input">Tail:</label><input class="form-control" style="width:57px" value="1000" disabled aria-label="Tail"><span class="text-black" style="padding-left:7px">ms</span></div></fieldset>
    <div class="grp" style="margin-top:12px;height:101px;padding:12px 11px 0 9px">
      <div class="d-flex" style="gap:6px;margin-bottom:8px"><input class="form-control text-end" value="Media\output\64spl" aria-label="Directory"><button class="wb h22" style="flex:0 0 79px">Browse...</button></div>
      <div class="d-flex" style="gap:6px;margin-bottom:8px"><input class="form-control" aria-label="File name"><button class="wb h22" style="flex:0 0 79px">Wildcards</button></div>
      <div class="d-flex" style="gap:6px"><input class="form-control text-end" value="2025-01-16 14_55_19.wav" aria-label="Render to"><button class="wb h22" style="flex:0 0 79px" disabled>1 file</button></div></div>
    <div class="grp d-flex flex-column align-items-end" style="margin-top:11px;height:215px;padding:12px 11px 0 0">
      <select class="form-select" style="width:156px" aria-label="Speed"><option>Full-speed Offline</option></select>
      <div style="margin-top:10px;padding-right:98px">2nd pass render</div>
      <button class="wb h22" style="width:154px;margin-top:9px">Normalize/Limit/Fade</button>
      <div class="dis" style="width:136px;margin-top:9px"><label class="ck"><input type="checkbox" class="form-check-input" disabled>Dither stems</label><label class="ck" style="margin-top:4px"><input type="checkbox" class="form-check-input" disabled>Noise shape stems</label></div>
      <div class="dis" style="margin-top:8px;padding-right:98px">Take with markers</div><div class="dis" style="padding-right:110px;margin-top:3px">Stretch markers</div>
      <div class="d-flex align-items-center" style="gap:36px;margin-top:6px"><span>Embed metadata</span><button class="wb h22" style="width:86px" disabled>Metadata...</button></div></div>
    <div class="grp" style="margin:26px 2px 0 -3px;height:130px;padding:9px 0 0 18px;border-color:#fff;outline:1px solid #dcdcdc">
      <select class="form-select" style="width:440px" aria-label="Format"></select><select class="form-select" style="width:473px;margin-top:8px" aria-label="Depth"></select>
      <div class="d-flex" style="margin-top:9px;height:14px;gap:161px"><input type="checkbox" class="form-check-input" aria-label="BWF"><input type="checkbox" class="form-check-input" aria-label="Project name"></div>
      <div class="d-flex" style="margin-top:5px;gap:12px"><select class="form-select" style="width:261px" aria-label="Markers"><option>Do not include markers or regions</option></select><label class="ck"><input type="checkbox" class="form-check-input">Embed tempo</label></div></div>
    <div class="d-flex" style="margin-top:10px"><div style="width:313px"><label class="ck" style="height:22px"><input type="checkbox" class="form-check-input">Silently increment filenames to avoid overwriting</label><label class="ck" style="height:22px"><input type="checkbox" class="form-check-input" checked>Do not render files that are likely silent</label></div>
      <div><label class="ck" style="height:22px"><input type="checkbox" class="form-check-input">Add rendered items to new tracks in project</label><label class="ck" style="height:22px"><input type="checkbox" class="form-check-input">Save copy of project to outfile.wav.RPP</label><label class="ck" style="height:22px"><input type="checkbox" class="form-check-input">Save outfile.render_stats.html</label></div></div>
    <div class="d-flex" style="margin-top:6px;gap:9px"><button class="wb" style="width:145px">Queued Renders...</button><button class="wb ms-auto" style="width:145px">Dry Run (no output)</button><button class="wb" style="width:145px">Render 1 file</button></div>
    <div class="d-flex justify-content-end" style="margin-top:9px;gap:9px"><button class="wb" style="width:77px">Cancel</button><button class="wb" style="width:108px" disabled>Save Settings</button></div>
  </div>
</div>

<!-- render progress -->
<div class="win w-fin">
  <div class="bar d-flex align-items-center" style="height:33px;padding:0 21px 0 8px"><svg width="18" height="20" class="me-1"><use href="#reaper"/></svg>Finished in 0:24 &nbsp;&nbsp; (12.3x realtime)<div class="ms-auto d-flex align-items-center" style="gap:41px"><svg width="12" height="12"><use href="#min"/></svg><svg width="12" height="12" style="color:#ccc"><use href="#max"/></svg><svg width="13" height="12"><use href="#x"/></svg></div></div>
  <div style="padding:13px 13px 0 12px">
    <fieldset style="height:76px"><legend>Output file</legend><input class="form-control selin" style="width:756px;margin:6px 0 0 10px" aria-label="Output file" value="C:\Users\cimil\Develop\SPARTA\MEASURES\PAPER_PERF\Media\output\64spl\03_NEW_ch16_500ms---2025-01-16 14_55_19.wav">
      <div class="text-center" style="margin:4px 24px 0 0">WAV: 24bit PCM, 48000Hz, 16ch, 18000kbps</div></fieldset>
    <fieldset style="height:232px;margin-top:12px"><legend>Render status</legend>
      <div class="progress done" style="margin:9px 22px 0 23px"><div class="progress-bar w-100"></div></div>
      <div class="text-center" style="margin:11px 24px 10px 0">Finished in 0:24 &nbsp;&nbsp; (12.3x realtime)</div>
      <div class="d-flex align-items-center"><div class="text-end" style="width:173px;padding-right:7px">Master mix</div><div class="meter flex-fill" style="margin-right:9px" id="meter"></div></div></fieldset>
    <div class="d-flex align-items-center" style="margin-top:20px"><span style="width:98px">When finished:</span><label class="ck" style="width:157px"><input type="checkbox" class="form-check-input">Close render windows</label><label class="ck"><input type="checkbox" class="form-check-input">Return to render setup</label><button class="wb ms-auto" style="width:115px">Stats/Charts</button></div>
    <div class="d-flex" style="margin-top:6px;gap:6px"><button class="wb" style="width:115px">Launch file</button><button class="wb" style="width:130px">Open folder...</button><button class="wb" style="width:130px">Media Explorer...</button><button class="wb def ms-auto" style="width:115px">Back</button><button class="wb" style="width:115px;margin-left:3px">Close</button></div>
  </div>
</div>
</main>
<script>
const $=s=>document.getElementById(s);
const png='IrfanView PNG File';
const rows=[['4','31-Jan-24 13:13','3,722'],['5','31-Jan-24 13:13','3,726'],['6','31-Jan-24 19:08','4,381'],['7','31-Jan-24 19:08','4,345'],['8','31-Jan-24 19:08','4,312'],['9','01-Feb-24 18:15','4,411'],['10','01-Feb-24 18:23','4,779'],['11','01-Feb-24 18:23','4,799'],['12','01-Feb-24 18:23','4,797'],['13','01-Feb-24 18:23','4,837'],['14','01-Feb-24 18:24','4,476'],['15','01-Feb-24 18:24','4,478'],['16','01-Feb-24 18:24','4,483'],['17','01-Feb-24 18:24','4,617'],['18','13-Feb-24 16:50','429'],['19','05-Mar-24 16:48','1,982'],['20','14-Mar-24 11:40','1,836'],['t','23-Nov-24 11:45','3'],['21','14-Mar-24 11:43','1,633'],['22','14-Mar-24 11:43','1,633'],['23','02-May-24 14:53','2,294'],['24','03-May-24 12:03','4,006'],['25','05-Jul-24 13:14','2,338'],['26','19-Aug-24 15:56','778'],['38','16-Jan-25 11:57','29'],['42','16-Jan-25 14:30','632'],['43','16-Jan-25 14:31','634'],['44','16-Jan-25 14:31','636'],['45','16-Jan-25 14:45','613'],['46','16-Jan-25 14:46','615'],['47','16-Jan-25 14:46','618'],['48','16-Jan-25 14:50','647'],['49','16-Jan-25 14:50','653'],['50','16-Jan-25 14:51','657'],['51','16-Jan-25 14:52','663'],['52','16-Jan-25 14:53','664'],['53','16-Jan-25 14:54','666']];
$('files').innerHTML=rows.map(([n,d,s])=>{const t=n=='t';const nm=t?'Screenshot (21)..txt':`Screenshot (${n})${n=='38'?'-startmeasures':''}.png`;
return `<tr${n=='48'?' class="on"':''}><td><div class="d-flex align-items-center"><svg width="16" height="16" class="me-1"><use href="#${t?'doc':'irf'}"/></svg>${nm}</div></td><td>${d}</td><td>${t?'Text Document':png}</td><td>${s} KB</td><td></td></tr>`}).join('');
const tree=[['star','Quick access','r'],['devf','develop-farina-p','p'],['folder','SOFA','p'],['folder','SOFA_tindari_vari','p'],['shield','SPARTA','p'],['folder','VSTPlugins','p'],['folder','VST3','p'],['hand','Develop','p'],['desktop','Desktop','p'],['down','Downloads','p'],['doc','Documents','p'],['shared','Shared','p'],['folder','plugin-02-custom','p'],['pic','Pictures','p'],['folder','Plugin','p'],['netfolder','domenico','p'],['folder','vscode-cpptools','p'],['bin','Recycle Bin','p'],['folder','createTESTsofa',''],['folder','PAPER_PERF',''],['folder','puredata_recorder',''],['folder','Screenshots',''],0,['pc','This PC','r'],['cube','3D Objects',''],['desktop','Desktop',''],['doc','Documents',''],['netfolder','DomTower-Media',''],['down','Downloads',''],['netfolder','loc-CIMIL_NAS_dom',''],['music','Music',''],['pic','Pictures','s'],['video','Videos',''],['netfolder','vpn-CIMIL_NAS_dom','']];
$('tree').innerHTML=tree.map(t=>t?`<a href="#" class="d-flex align-items-center ${t[2]=='r'?'root':t[2]=='s'?'on wide':t[2]==''?'wide':''}"><svg width="18" height="18" class="me-1"><use href="#${t[0]}"/></svg><span class="nm">${t[1]}</span>${t[2]=='p'?'<svg width="11" height="12"><use href="#pin"/></svg>':''}</a>`:'<div class="gapx"></div>').join('');
const apps=['win','task','tg','notion','cal','expl','gmail','chrome','g8','steps','house','orb','gear','code','reaper'];
document.querySelectorAll('.tray-apps').forEach(e=>e.innerHTML=apps.map((a,i)=>`<button aria-label="${a}" class="d-flex align-items-center justify-content-center ${a=='reaper'?'act':['expl','gear','code'].includes(a)?'run':''} ${i==1?'me-1':''}"><svg width="${i<2?18:17}" height="18"><use href="#${a}"/></svg></button>`).join(''));
$('marks').innerHTML=[['1.1.00','0:00.000'],['33.1.00','1:04.000'],['65.1.00','2:08.000'],['97.1.00','3:12.000'],['129.1.00','4:16.000'],['161.1.00','5:20.000'],['193.1.00','6:24.000'],['225.1.00','7:28.000']].map(m=>`<div class="mk"><u>${m[0]}</u><b>${m[1]}</b></div>`).join('');
const P=d=>`<svg width="25" height="26" viewBox="0 0 25 26" fill="none" stroke="currentColor" stroke-width="1.300">${d}</svg>`;
const B=(d,g)=>`<button class="${g?'gr':''}" aria-label="Toolbar">${P(d)}</button>`;
$('tools').innerHTML=`<div class="d-flex justify-content-between" style="width:191px">`+[
'<path d="M8 5h6l4 4v12H8zM14 5v4h4"/>','<path d="M5 16h16v6H5z"/><path d="M13 14V4M10 7l3-4 3 4" stroke-width="2"/>','<path d="M5 16h16v6H5z" fill="currentColor"/><path d="M13 3v10M10 9l3 4 3-4" stroke-width="2"/>','<circle cx="12.500" cy="13" r="8.500"/><path d="M12.500 12v6M10.500 18h4M10.500 12h2M12.500 8v2" stroke-width="1.600"/>','<path d="M4 8v7h7z" fill="currentColor"/><path d="M7 13c4-5 10-5 14 1" stroke-width="3"/>','<path d="M21 8v7h-7z" fill="currentColor"/><path d="M18 13c-4-5-10-5-14 1" stroke-width="3"/>','<path d="M9 22l2-14h3l2 14z" fill="currentColor"/><path d="M5 12c2-8 13-8 15 0M12.500 2v4"/>'].map(d=>B(d)).join('')+
`</div><div style="margin:0 15px 0 16px">`+B('<path d="M5 5h15v16H5z" fill="#777" stroke-dasharray="2 1"/>')+`</div><div class="d-flex justify-content-between" style="width:190px">`+[
['<path d="M4 5h4l8 16h5M21 5h-5L8 21H4"/>',1],['<rect x="4" y="10" width="9" height="6" rx="3"/><rect x="12" y="10" width="9" height="6" rx="3"/>',1],['<path d="M5 5h3v3H5zM11 5h3v3h-3zM17 5h3v3h-3zM5 11h3v3H5zM11 11h3v3h-3zM17 11h3v3h-3zM5 17h3v3H5zM11 17h3v3h-3zM17 17h3v3h-3z"/>',0],['<path d="M7 11l5.500-6 5.500 6" stroke-width="2"/><rect x="5" y="16" width="8" height="5" rx="2.500"/><rect x="12" y="16" width="8" height="5" rx="2.500"/>',1],['<path d="M5 5v17M10 5v17M15 5v17M20 5v17" stroke-dasharray="3 1.500"/>',1],['<path d="M6 6h7c8 0 8 13 0 13H6" stroke-width="3" stroke-dasharray="3 1 60"/>',1],['<path d="M6 12h13v9H6z" fill="currentColor"/><path d="M9 12V8c0-4 7-4 7 0v4" stroke-width="2"/>',1]].map(d=>B(d[0],d[1])).join('')+
`</div><div style="margin-left:28px">`+B('<path d="M4 4h15v19zM8 4l11 16M12 4l7 11" fill="#888"/>')+`</div>`;
const lv=['-16.5','-22.2','-24.4','-18.8','-21.6','-26.4','-23.9','-24.7','-21.9','-21.5','-25.5','-27.2','-26.8','-24.3','-26.7','-23.8'];
$('meter').innerHTML=lv.map(v=>[60,54,48,42,36,30,24,18,12,6].map((n,i)=>`<span class="c${i}">-${n}</span>`).join('')+`<span>${v}</span>`).join('');
$('cA').innerHTML=['64','3','16','1','16'].map(v=>`<input class="bx" value="${v}" aria-label="Channels">`).join('');
$('rots').innerHTML=['Yaw','Pitch','Roll'].map((n,i)=>`<div class="rot"><div class="text-nowrap" style="font-size:10px;height:18px"><b style="font-size:10px">${n}</b>/ypr[${i}]</div><svg width="60" height="60" class="mx-auto"><use href="#kn"/></svg><input class="bx" value="0.00" aria-label="${n}"><div class="d-flex align-items-center justify-content-center fw-bold" style="gap:3px;margin-top:6px">+/-<input type="radio" aria-label="Flip ${n}"></div></div>`).join('');
let g='';for(let i=1;i<15;i++)g+=`<path d="M${11+i*23.4} 14v41"/>`;$('grid').innerHTML=g;
</script>
</body>
</html>
